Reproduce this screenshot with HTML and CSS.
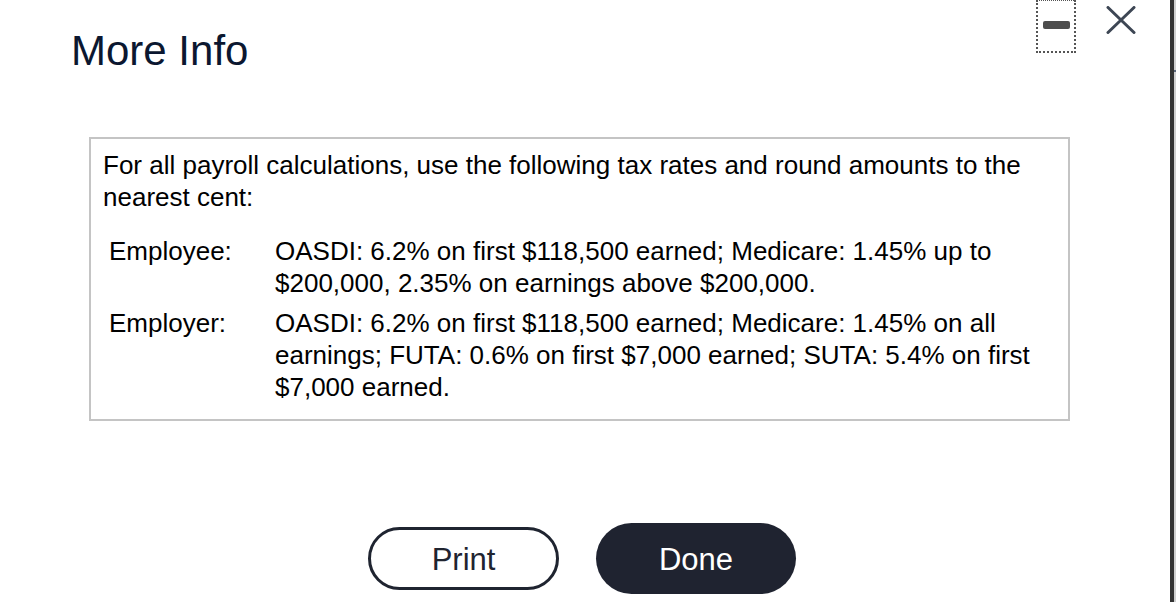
FILE: index.html
```html
<!DOCTYPE html>
<html lang="en">
<head>
<meta charset="utf-8">
<title>More Info</title>
<link rel="stylesheet" href="styles.css">
</head>
<body>
<div class="dialog">
  <header class="header">
    <h1 class="title">More Info</h1>
    <div class="controls">
      <button class="minimize" aria-label="Minimize"><span class="bar"></span></button>
      <button class="close" aria-label="Close">
        <svg width="30" height="28" viewBox="0 0 30 28"><path d="M2 1.5 L28 26.5 M28 1.5 L2 26.5" stroke="#3d4654" stroke-width="3" stroke-linecap="round" fill="none"/></svg>
      </button>
    </div>
  </header>
  <main class="content">
    <section class="info">
      <p class="intro">For all payroll calculations, use the following tax rates and round amounts to the nearest cent:</p>
      <div class="terms">
        <div class="label">Employee:</div>
        <div class="value">OASDI: 6.2% on first $118,500 earned; Medicare: 1.45% up to $200,000, 2.35% on earnings above $200,000.</div>
        <div class="label">Employer:</div>
        <div class="value">OASDI: 6.2% on first $118,500 earned; Medicare: 1.45% on all earnings; FUTA: 0.6% on first $7,000 earned; SUTA: 5.4% on first $7,000 earned.</div>
      </div>
    </section>
    <div class="actions">
      <button class="btn btn-print">Print</button>
      <button class="btn btn-done">Done</button>
    </div>
  </main>
</div>
<div class="edge"><span class="tick"></span></div>
</body>
</html>
```
FILE: styles.css
```css
html, body {
  margin: 0;
  padding: 0;
  background: #fff;
}
body {
  width: 1176px;
  height: 602px;
  overflow: hidden;
  position: relative;
  font-family: "Liberation Sans", Arial, sans-serif;
}
.dialog {
  display: flex;
  flex-direction: column;
}
.header {
  display: flex;
  align-items: flex-start;
  padding-left: 71px;
  padding-right: 40px;
}
.title {
  margin: 27px 0 0 0;
  font-size: 42px;
  line-height: 48px;
  font-weight: normal;
  color: #0b1730;
}
.controls {
  margin-left: auto;
  display: flex;
  align-items: flex-start;
  gap: 30px;
}
.minimize {
  width: 40px;
  height: 53px;
  margin: 0;
  padding: 0 0 3px 0;
  border: 2px dotted #555;
  border-top-width: 1px;
  background: #fff;
  display: flex;
  align-items: center;
  justify-content: center;
  box-sizing: border-box;
}
.bar {
  display: block;
  width: 27px;
  height: 8px;
  border-radius: 2px;
  background: #4d4d4d;
}
.close {
  margin: 6px 0 0 0;
  padding: 0;
  border: 0;
  background: transparent;
  width: 30px;
  height: 28px;
  display: block;
}
.close svg {
  display: block;
}
.content {
  margin-left: 89px;
  width: 981px;
  display: flex;
  flex-direction: column;
}
.info {
  margin-top: 62px;
  border: 2px solid #c4c4c4;
  padding: 10px 10px 16px 12px;
  font-size: 26px;
  line-height: 32px;
  color: #000;
}
.intro {
  margin: 0;
}
.terms {
  margin-top: 22px;
  margin-left: 6px;
  display: grid;
  grid-template-columns: 166px 1fr;
  row-gap: 8px;
}
.actions {
  margin-top: 102px;
  display: flex;
  justify-content: center;
  align-items: center;
  gap: 37px;
  padding-left: 5px;
}
.btn {
  font-family: "Liberation Sans", Arial, sans-serif;
  font-size: 31px;
  margin: 0;
  padding: 2px 0 0 0;
  border-radius: 40px;
  box-sizing: border-box;
  display: flex;
  align-items: center;
  justify-content: center;
}
.btn-print {
  width: 191px;
  height: 63px;
  border: 3px solid #1f2430;
  background: #fff;
  color: #1f2430;
}
.btn-done {
  width: 200px;
  height: 71px;
  border: 0;
  background: #1f2330;
  color: #fff;
}
.edge {
  position: absolute;
  top: 0;
  bottom: 0;
  right: 0;
  width: 6px;
  background: #333;
  border-right: 2px solid #cfcfcf;
  box-sizing: border-box;
}
.tick {
  position: absolute;
  top: 70px;
  right: -2px;
  width: 2px;
  height: 2px;
  background: #5a6578;
}
```
